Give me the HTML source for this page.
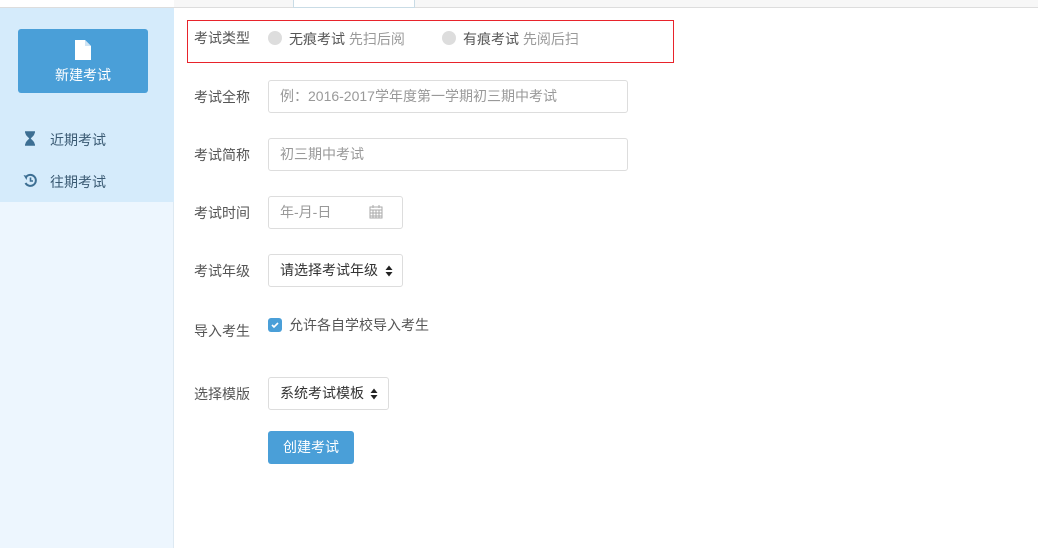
<!DOCTYPE html>
<html><head><meta charset="utf-8"><style>
*{box-sizing:border-box;margin:0;padding:0}
body{width:1038px;height:548px;overflow:hidden;background:#fff;font-family:"Liberation Sans","Noto Sans CJK SC",sans-serif;font-size:14px;color:#555;position:relative}
.abs{position:absolute}
.lbl{position:absolute;left:194px;font-size:14px;color:#555;line-height:16px}
.inp{position:absolute;left:268px;height:33px;border:1px solid #ddd;border-radius:3px;color:#999;font-size:14px;line-height:31px;padding-left:11px}
.arr{position:absolute;top:10px;width:8px;height:12px}
</style></head><body>
<div class="abs" style="left:0;top:0;width:1038px;height:8px;background:#f7f7f7;border-bottom:1px solid #ddd"></div>
<div class="abs" style="left:0;top:0;width:174px;height:8px;background:#fff;border-bottom:1px solid #ddd"></div>
<div class="abs" style="left:293px;top:0;width:122px;height:8px;background:#fff;border-left:1px solid #c9dce6;border-right:1px solid #c9dce6;border-bottom:1px solid #c9dce6"></div>
<div class="abs" style="left:0;top:8px;width:174px;height:194px;background:#d5ebfb"></div>
<div class="abs" style="left:0;top:202px;width:174px;height:346px;background:#edf6fe;border-right:1px solid #dde9f2"></div>
<div class="abs" style="left:18px;top:29px;width:130px;height:64px;background:#4a9fd8;border-radius:3px;color:#fff;text-align:center">
<svg class="abs" style="left:56px;top:10px" width="18" height="22" viewBox="0 0 18 22"><path d="M1 1h10l6 6v14H1z" fill="#fff"/><path d="M11 1v6h6" fill="#cfe4f4"/></svg>
<div class="abs" style="left:0;top:36px;width:130px;font-size:14px">新建考试</div></div>
<svg class="abs" style="left:24px;top:131px" width="12" height="15" viewBox="0 0 12 15"><path d="M1 1h10M1 14h10M2 1c0 4 4 5 4 6.5S2 10 2 14h8c0-4-4-5-4-6.5S10 5 10 1" fill="#3d6f93" stroke="#3d6f93" stroke-width="1.6"/></svg>
<div class="abs" style="left:50px;top:130px;color:#3a5a73">近期考试</div>
<svg class="abs" style="left:23px;top:173px" width="15" height="15" viewBox="0 0 15 15"><path d="M3 4A5.5 5.5 0 1 1 2.5 10" fill="none" stroke="#3d6f93" stroke-width="2"/><path d="M0.5 2l4 1-1 4z" fill="#3d6f93"/><path d="M7.5 4.5v3.5h2.5" fill="none" stroke="#3d6f93" stroke-width="1.6"/></svg>
<div class="abs" style="left:50px;top:172px;color:#3a5a73">往期考试</div>

<div class="abs" style="left:187px;top:20px;width:487px;height:43px;border:1px solid #e8232b"></div>
<div class="lbl" style="top:30px">考试类型</div>
<div class="abs" style="left:268px;top:31px;width:14px;height:14px;border-radius:50%;background:#ddd"></div>
<div class="abs" style="left:289px;top:29px;color:#555">无痕考试 <span style="color:#999">先扫后阅</span></div>
<div class="abs" style="left:442px;top:31px;width:14px;height:14px;border-radius:50%;background:#ddd"></div>
<div class="abs" style="left:463px;top:29px;color:#555">有痕考试 <span style="color:#999">先阅后扫</span></div>

<div class="lbl" style="top:89px">考试全称</div>
<div class="inp" style="top:80px;width:360px">例：2016-2017学年度第一学期初三期中考试</div>
<div class="lbl" style="top:147px">考试简称</div>
<div class="inp" style="top:138px;width:360px">初三期中考试</div>
<div class="lbl" style="top:205px">考试时间</div>
<div class="inp" style="top:196px;width:135px">年-月-日
<svg class="abs" style="left:100px;top:8px" width="14" height="14" viewBox="0 0 14 14"><rect x="1" y="2" width="12" height="11" fill="none" stroke="#aaa"/><path d="M1 5h12M4 5v8M7 5v8M10 5v8M1 8h12M1 11h12M4 0v3M10 0v3" stroke="#aaa"/></svg></div>
<div class="lbl" style="top:263px">考试年级</div>
<div class="inp" style="top:254px;width:135px;color:#333">请选择考试年级<svg class="arr" style="left:116px" viewBox="0 0 8 12"><path d="M4 0.5L7.5 5h-7zM4 11.5L7.5 7h-7z" fill="#222"/></svg></div>
<div class="lbl" style="top:323px">导入考生</div>
<div class="abs" style="left:268px;top:318px;width:14px;height:14px;border-radius:3px;background:#4a9fd8"><svg width="14" height="14"><path d="M4 7l2 2 4-4" fill="none" stroke="#fff" stroke-width="1.6"/></svg></div>
<div class="abs" style="left:289px;top:315px;color:#555">允许各自学校导入考生</div>
<div class="lbl" style="top:386px">选择模版</div>
<div class="inp" style="top:377px;width:121px;color:#333">系统考试模板<svg class="arr" style="left:101px" viewBox="0 0 8 12"><path d="M4 0.5L7.5 5h-7zM4 11.5L7.5 7h-7z" fill="#222"/></svg></div>
<div class="abs" style="left:268px;top:431px;width:86px;height:33px;background:#4a9fd8;border-radius:3px;color:#fff;text-align:center;line-height:33px">创建考试</div>
</body></html>
